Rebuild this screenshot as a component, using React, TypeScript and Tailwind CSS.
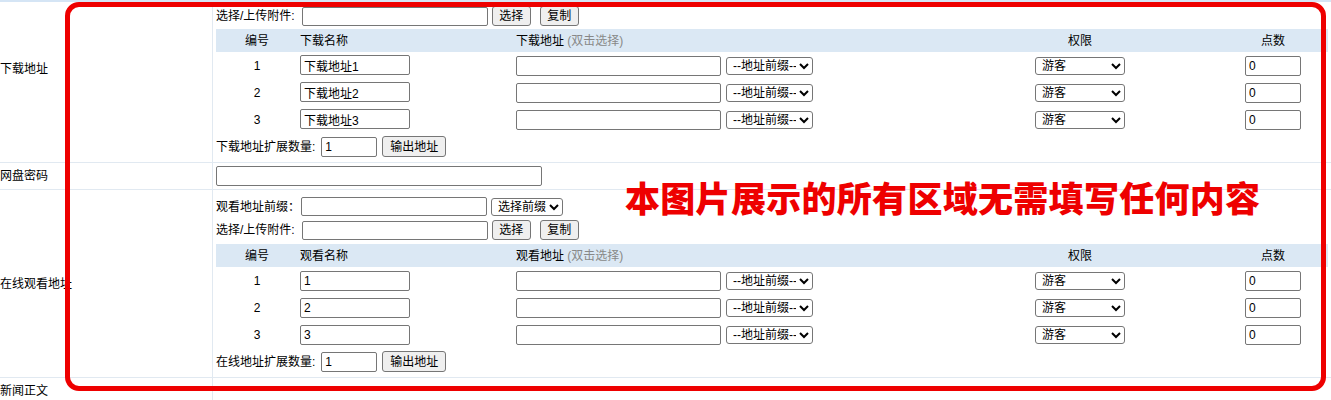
import React from "react"

const inputCls =
  "border border-[#767676] rounded-[2px] bg-white px-[3px] text-[12px] text-black outline-none"
const btnCls =
  "border border-[#767676] rounded-[3px] bg-[#efefef] px-[6px] text-[12px] text-black leading-none"
const selectCls =
  "border border-[#767676] rounded-[3px] bg-white text-[12px] text-black pl-[2px]"

function TextInput({ value = "", className = "" }: { value?: string; className?: string }) {
  return <input type="text" defaultValue={value} className={`${inputCls} ${className}`} />
}

function Btn({ label, className = "" }: { label: string; className?: string }) {
  return (
    <button type="button" className={`${btnCls} ${className}`}>
      {label}
    </button>
  )
}

function Select({ options, className = "" }: { options: string[]; className?: string }) {
  return (
    <select className={`${selectCls} ${className}`} defaultValue={options[0]}>
      {options.map((o) => (
        <option key={o}>{o}</option>
      ))}
    </select>
  )
}

function UploadLine({ className = "" }: { className?: string }) {
  return (
    <div className={`flex items-center ${className}`}>
      <span>选择/上传附件:</span>
      <TextInput className="ml-[7px] w-[186px] h-[19px]" />
      <Btn label="选择" className="ml-[4px] w-[39px] h-[20px]" />
      <Btn label="复制" className="ml-[9px] w-[39px] h-[20px]" />
    </div>
  )
}

interface AddressTableProps {
  nameTitle: string
  urlTitle: string
  names: string[]
  countLabel: string
}

function AddressTable({ nameTitle, urlTitle, names, countLabel }: AddressTableProps) {
  return (
    <div>
      {/* header */}
      <div className="mt-[2px] flex h-[23px] items-center bg-[#dbe8f4]">
        <div className="w-[82px] text-center">编号</div>
        <div className="w-[216px] pl-[2px]">{nameTitle}</div>
        <div className="w-[428px] pl-[2px]">
          {urlTitle} <span className="text-[#888]">(双击选择)</span>
        </div>
        <div className="w-[276px] text-center">权限</div>
        <div className="flex-1 text-center">点数</div>
      </div>

      {names.map((n, i) => (
        <div key={i} className="flex h-[27px] items-center">
          <div className="w-[82px] text-center">{i + 1}</div>
          <div className="w-[216px] pl-[2px]">
            <TextInput value={n} className="w-[110px] h-[20px]" />
          </div>
          <div className="flex w-[428px] items-center pl-[2px]">
            <TextInput className="w-[205px] h-[20px]" />
            <Select options={["--地址前缀--"]} className="ml-[5px] w-[87px] h-[18px]" />
          </div>
          <div className="flex w-[276px] justify-center">
            <Select options={["游客", "会员", "VIP"]} className="w-[90px] h-[18px]" />
          </div>
          <div className="flex flex-1 justify-center">
            <TextInput value="0" className="w-[56px] h-[20px]" />
          </div>
        </div>
      ))}

      <div className="flex h-[27px] items-center">
        <span>{countLabel}</span>
        <TextInput value="1" className="ml-[6px] w-[56px] h-[20px]" />
        <Btn label="输出地址" className="ml-[5px] h-[21px] px-[7px]" />
      </div>
    </div>
  )
}

export default function App() {
  return (
    <div className="relative w-[1331px] h-[400px] overflow-hidden bg-white text-[12px] text-black font-['Liberation_Sans','Noto_Sans_CJK_SC',sans-serif]">
      <div className="border-t-2 border-[#d5e5f5]">
        {/* 下载地址 */}
        <div className="grid grid-cols-[213px_1fr] border-b border-[#e1e9f1]">
          <div className="flex items-center border-r border-[#e1e9f1] pb-[26px]">下载地址</div>
          <div className="px-[3px] pt-[3px] pb-[2px]">
            <UploadLine className="h-[22px]" />
            <AddressTable
              nameTitle="下载名称"
              urlTitle="下载地址"
              names={["下载地址1", "下载地址2", "下载地址3"]}
              countLabel="下载地址扩展数量:"
            />
          </div>
        </div>

        {/* 网盘密码 */}
        <div className="grid grid-cols-[213px_1fr] border-b border-[#e1e9f1]">
          <div className="flex items-center border-r border-[#e1e9f1]">网盘密码</div>
          <div className="flex items-center px-[3px] py-[3px]">
            <TextInput className="w-[326px] h-[20px]" />
          </div>
        </div>

        {/* 在线观看地址 */}
        <div className="grid grid-cols-[213px_1fr] border-b border-[#e1e9f1]">
          <div className="flex items-center border-r border-[#e1e9f1]">在线观看地址</div>
          <div className="px-[3px] pt-[5px] pb-[2px]">
            <div className="flex h-[23px] items-center">
              <span>观看地址前缀：</span>
              <TextInput className="ml-[1px] w-[186px] h-[19px]" />
              <Select options={["选择前缀"]} className="ml-[4px] w-[72px] h-[18px]" />
            </div>
            <UploadLine className="h-[24px]" />
            <AddressTable
              nameTitle="观看名称"
              urlTitle="观看地址"
              names={["1", "2", "3"]}
              countLabel="在线地址扩展数量:"
            />
          </div>
        </div>

        {/* 新闻正文 */}
        <div className="grid grid-cols-[213px_1fr]">
          <div className="flex h-[26px] items-center border-r border-[#e1e9f1]">新闻正文</div>
          <div />
        </div>
      </div>

      {/* annotation overlay */}
      <div className="pointer-events-none absolute left-[65px] top-[2px] h-[389px] w-[1261px] rounded-[14px] border-[5px] border-[#ee0000]" />
      <div className="pointer-events-none absolute left-[625px] top-[179px] text-[35px] font-black leading-none tracking-[0.3px] text-[#ee0000] font-['Noto_Sans_CJK_SC',sans-serif]">
        本图片展示的所有区域无需填写任何内容
      </div>
    </div>
  )
}
